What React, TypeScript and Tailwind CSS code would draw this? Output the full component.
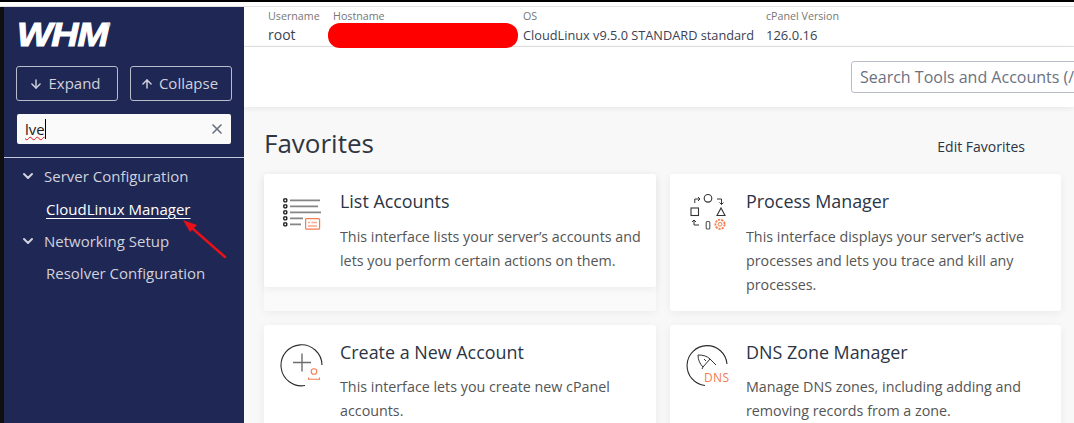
import { ArrowDown, ArrowUp, ChevronDown, X } from 'lucide-react';

const font = { sans: 'font-["Open_Sans",sans-serif]' };

function ListIcon() {
    return (
        <svg width="38" height="32" viewBox="0 0 38 32" fill="none">
            {[0, 1, 2, 3, 4].map(i => (
                <rect key={i} x="0.8" y={0.8 + i * 6} width="3" height="3" stroke="#111" strokeWidth="1.3" rx="0.8" />
            ))}
            <path d="M7 2.3h30M7 8.3h28M7 14.3h31M7 20.3h13M7 26.3h11" stroke="#858585" strokeWidth="1.7" />
            <rect x="22.6" y="20.6" width="14" height="10.6" rx="1" fill="#fff" stroke="#f47c4c" strokeWidth="1.2" />
            <path d="M25 24.5h2M28.5 24.5h5.5M25 28h9" stroke="#f9a98a" strokeWidth="1.5" />
        </svg>
    );
}

function ProcessIcon() {
    return (
        <svg width="36" height="38" viewBox="0 0 36 38" fill="none">
            <circle cx="18" cy="5.3" r="3.8" stroke="#333" strokeWidth="1.1" />
            <rect x="1" y="15" width="7.5" height="7.5" stroke="#333" strokeWidth="1.1" />
            <path d="M31 15l4 7.5h-8z" stroke="#333" strokeWidth="1.1" />
            <rect x="16.2" y="28.5" width="3.6" height="7.5" rx="1" stroke="#555" strokeWidth="1.1" />
            <path d="M4.8 10V6h5M8 4l2 2-2 2M27 6h4.5v5.5M29.5 9.5l2 2 2-2M9 32H4v-5M2 29l2-2 2 2" stroke="#333" strokeWidth="1" />
            <circle cx="30" cy="31.3" r="4.6" stroke="#f47c4c" strokeWidth="1.8" strokeDasharray="2.2 1" />
            <circle cx="30" cy="31.3" r="1.9" stroke="#f47c4c" strokeWidth="1" />
        </svg>
    );
}

function CreateIcon() {
    return (
        <svg width="44" height="44" viewBox="0 0 44 44" fill="none">
            <path d="M25 41.5A20.5 20.5 0 1 1 42 21" stroke="#2b2b2b" strokeWidth="1.1" />
            <path d="M22 9.5v18M13 18.5h18" stroke="#6e6e6e" strokeWidth="1.4" />
            <circle cx="34" cy="27.5" r="2.8" stroke="#f47c4c" strokeWidth="1.1" />
            <path d="M28.5 33.5v1.8h11v-1.8" stroke="#f47c4c" strokeWidth="1.1" />
        </svg>
    );
}

function DnsIcon() {
    return (
        <svg width="44" height="44" viewBox="0 0 44 44" fill="none">
            <path d="M19 40.5A20 20 0 1 1 41 19" stroke="#2b2b2b" strokeWidth="1.1" />
            <path d="M12 10c5 0 9 1 12 4l-7 8c-3-3-5-7-5-12zM24 14l6 6M17 22l-1 2M18 14l2 2" stroke="#333" strokeWidth="1" />
            <text x="18" y="37" fontSize="12" letterSpacing="0.4" fill="#f47c4c" fontFamily="Open Sans, sans-serif">DNS</text>
        </svg>
    );
}

function Card({ icon, title, text, tall, iconClass, bodyClass = 'mt-[11px]' }: { icon: React.ReactNode; title: string; text: string; tall?: boolean; iconClass: string; bodyClass?: string }) {
    return (
        <div className={`rounded-[3px] bg-white shadow-[0_2px_10px_rgba(0,0,0,0.06)] flex ${tall ? 'h-[137px]' : 'h-[113px]'}`}>
            <div className={`w-[76px] shrink-0 flex justify-center ${iconClass}`}>{icon}</div>
            <div className="pt-[15px] pr-3">
                <div className="text-[17.9px] leading-[25px] text-[#2b3445]">{title}</div>
                <p className={`${bodyClass} text-[14.3px] leading-[24px] text-[#555]`}>{text}</p>
            </div>
        </div>
    );
}

export default function App() {
    return (
        <div className={`relative h-[423px] w-[1074px] overflow-hidden bg-white ${font.sans}`}>
            <div className="h-[2px] bg-black" />
            <div className="h-[5px] bg-white border-b border-[#e2e2e2]" />
            <div className="flex h-[416px]">
                <div className="w-[4px] bg-[#0f0f0f]" />
                <aside className="w-[240px] shrink-0 bg-[#1f2754] text-[#d0d2dc]">
                    <div className="relative h-[59px] pl-[13px] pt-[8px]">
                        <span className="inline-block origin-left scale-x-[1.14] text-[33px] leading-[40px] font-black italic text-white font-['Liberation_Sans',sans-serif] tracking-[-1px] [-webkit-text-stroke:1px_white]">WHM</span>
                        <span className="absolute left-[102px] top-[14px] text-[6px] leading-[8px] text-[#d0d2dc]">®</span>
                    </div>
                    <div className="flex gap-3 px-[12px]">
                        <button className="flex h-[35px] w-[102px] items-center justify-center gap-[5px] rounded-[3px] border border-[#b9bccb] pr-[4px] text-[15px]">
                            <ArrowDown size={14} strokeWidth={2.5} /> Expand
                        </button>
                        <button className="flex h-[35px] w-[102px] items-center justify-center gap-[5px] rounded-[3px] border border-[#b9bccb] pr-[4px] text-[15px]">
                            <ArrowUp size={14} strokeWidth={2.5} /> Collapse
                        </button>
                    </div>
                    <div className="mx-[13px] mt-[13px] flex h-[30px] items-center justify-between rounded-[2px] bg-[#fafafa] pl-[8px] pr-[6px]">
                        <span className="border-r border-black text-[15px] leading-[20px] text-[#222] underline decoration-wavy decoration-[#e81515] decoration-[1px]">lve</span>
                        <X size={16} strokeWidth={2.5} className="text-[#6b7280]" />
                    </div>
                    <div className="mt-[13px] h-[1px] bg-[#c5c8d8]" />
                    <nav className="text-[15px]">
                        <div className="mt-[7px] flex h-[22px] items-center gap-[8px] pl-[16px]">
                            <ChevronDown size={16} strokeWidth={3} /> Server Configuration
                        </div>
                        <div className="mt-[11px] h-[22px] pl-[42px] leading-[22px] text-white underline underline-offset-[3px]">CloudLinux Manager</div>
                        <div className="mt-[10px] flex h-[22px] items-center gap-[8px] pl-[16px]">
                            <ChevronDown size={16} strokeWidth={3} /> Networking Setup
                        </div>
                        <div className="mt-[10px] h-[22px] pl-[42px] leading-[22px]">Resolver Configuration</div>
                    </nav>
                </aside>
                <main className="flex-1 min-w-0 bg-[#f8f8f8]">
                    <div className="flex h-[40px] border-b border-[#e2e2e2] bg-white pl-[24px] text-[14px] text-[#3a4252]">
                        <div className="w-[65px]">
                            <div className="text-[10.7px] leading-[18px] text-[#777]">Username</div>
                            <div className="leading-[20px]">root</div>
                        </div>
                        <div className="w-[190px]">
                            <div className="text-[10.7px] leading-[18px] text-[#777]">Hostname</div>
                            <div className="-ml-[5px] -mt-[2px] h-[25px] w-[190px] rounded-[12px] bg-[#ff0000]" />
                        </div>
                        <div className="w-[243px]">
                            <div className="text-[10.7px] leading-[18px] text-[#777]">OS</div>
                            <div className="text-[12.75px] leading-[20px] whitespace-nowrap">CloudLinux v9.5.0 STANDARD standard</div>
                        </div>
                        <div>
                            <div className="text-[10.7px] leading-[18px] text-[#777]">cPanel Version</div>
                            <div className="text-[13px] leading-[20px]">126.0.16</div>
                        </div>
                    </div>
                    <div className="flex h-[60px] items-center justify-end overflow-hidden bg-white shadow-[0_1px_6px_rgba(0,0,0,0.08)]">
                        <div className="-mr-[60px] flex h-[32px] w-[283px] shrink-0 items-center rounded-[3px] border border-[#b9bccb] pl-[8px] text-[16px] whitespace-nowrap text-[#6b7280]">
                            Search Tools and Accounts (/)
                        </div>
                    </div>
                    <div className="flex items-center justify-between pl-[20px] pr-[49px] pt-[18px]">
                        <h1 className="text-[26px] leading-[36px] text-[#2f3542]">Favorites</h1>
                        <span className="mt-[6px] text-[14px] text-[#2b3445]">Edit Favorites</span>
                    </div>
                    <div className="mt-[13px] grid grid-cols-[392px_391px] gap-x-[14px] gap-y-[14px] pl-[20px]">
                        <div className="h-[137px] rounded-[3px] bg-[#fafafa] shadow-[0_2px_10px_rgba(0,0,0,0.05)]">
                            <Card icon={<ListIcon />} iconClass="pt-[24px]" title="List Accounts" text="This interface lists your server’s accounts and lets you perform certain actions on them." />
                        </div>
                        <Card tall icon={<ProcessIcon />} iconClass="pt-[19px]" title="Process Manager" text="This interface displays your server’s active processes and lets you trace and kill any processes." />
                        <Card icon={<CreateIcon />} iconClass="pt-[19px]" bodyClass="mt-[10px]" title="Create a New Account" text="This interface lets you create new cPanel accounts." />
                        <Card icon={<DnsIcon />} iconClass="pt-[20px]" bodyClass="mt-[10px]" title="DNS Zone Manager" text="Manage DNS zones, including adding and removing records from a zone." />
                    </div>
                </main>
            </div>
            <svg className="absolute left-[180px] top-[215px]" width="50" height="46" viewBox="0 0 50 46" fill="none">
                <path d="M45 42L12 13" stroke="#e8111a" strokeWidth="2.5" strokeLinecap="round" />
                <path d="M3 5l14 5-7 7z" fill="#e8111a" />
            </svg>
        </div>
    );
}
